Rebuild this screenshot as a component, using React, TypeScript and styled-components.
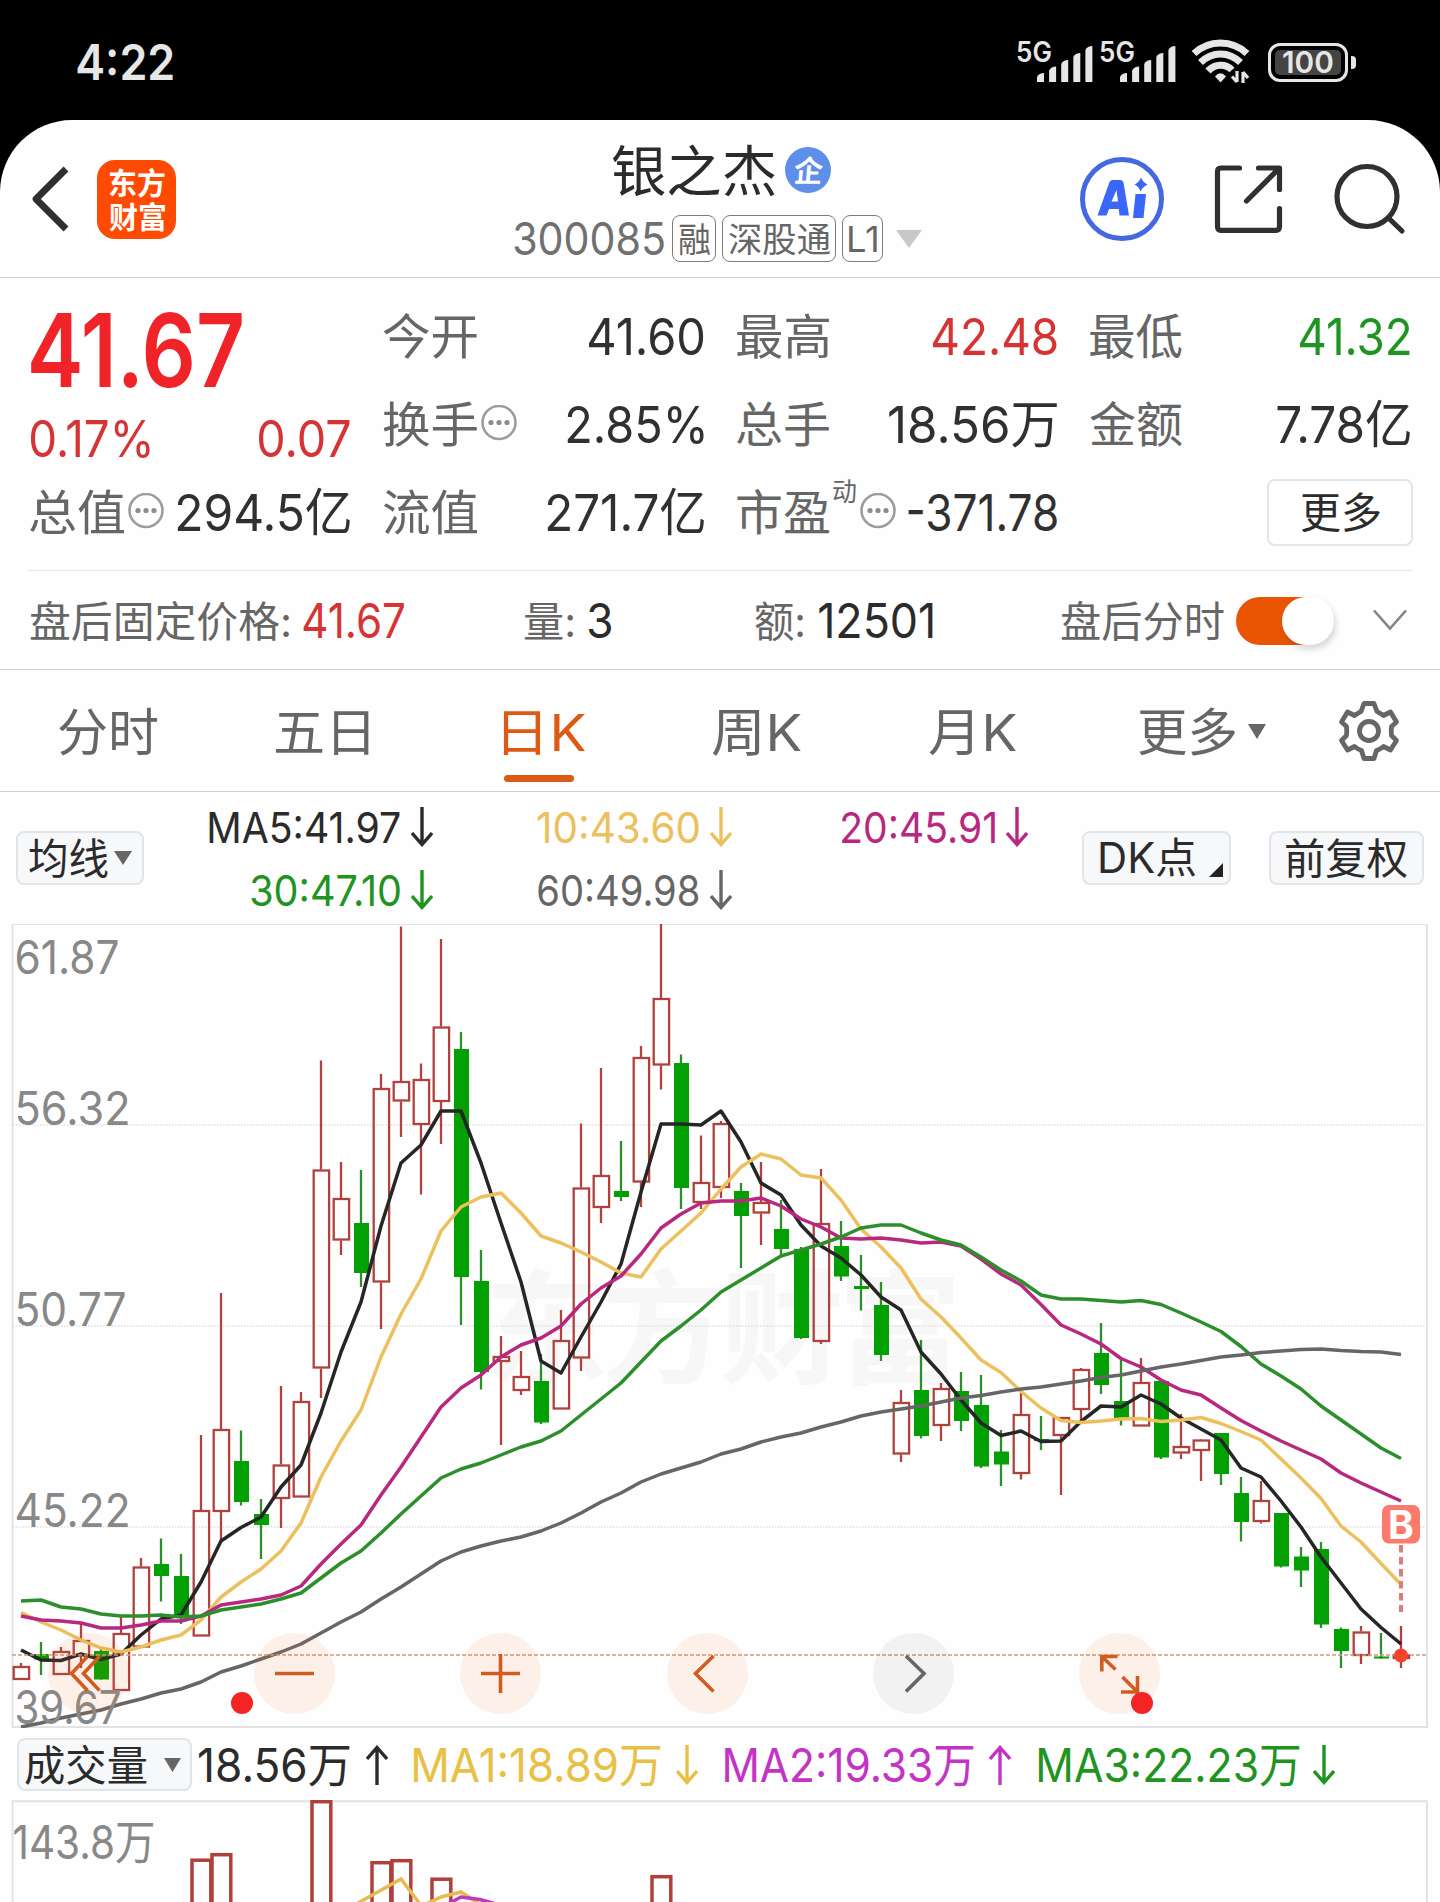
import React, { useLayoutEffect, useRef, useState } from 'react';
import styled, { createGlobalStyle } from 'styled-components';

const GlobalStyle = createGlobalStyle`
  html, body { margin: 0; padding: 0; background: #000; }
  body { font-family: Inter, "Noto Sans CJK SC", sans-serif; }
  * { box-sizing: border-box; }
  svg { display: block; flex: none; }
`;

const C = {
  text: '#2b2b2b',
  label: '#666666',
  axis: '#888888',
  line: '#cfcfcf',
  frame: '#e3e3e3',
  red: '#d63434',
  green: '#1f9420',
  orange: '#dd5a14',
  ma10: '#ecc05c',
  ma20: '#b8287e',
  candleRed: '#ae423e',
  candleGreen: '#02a002',
  candleWick: '#2c8f2c',
};

/* ---------- text fitted to a given ink width ---------- */

const InkBox = styled.span<{ $w: number; $size: number; $color: string; $weight: number }>`
  display: block;
  flex: none;
  width: ${(p) => p.$w}px;
  font-size: ${(p) => p.$size}px;
  line-height: ${(p) => p.$size}px;
  height: ${(p) => p.$size}px;
  color: ${(p) => p.$color};
  font-weight: ${(p) => p.$weight};
`;

const InkRun = styled.span`
  display: inline-block;
  white-space: nowrap;
  transform-origin: 0 50%;
`;

interface InkProps {
  w: number;
  size: number;
  color?: string;
  weight?: number;
  className?: string;
  children: string;
}

function Ink({ w, size, color = C.text, weight = 400, className, children }: InkProps) {
  const ref = useRef<HTMLSpanElement>(null);
  const [transform, setTransform] = useState('none');
  useLayoutEffect(() => {
    const ctx = document.createElement('canvas').getContext('2d');
    if (!ref.current || !ctx) return;
    const s = getComputedStyle(ref.current);
    ctx.font = `${s.fontWeight} ${s.fontSize} ${s.fontFamily}`;
    const m = ctx.measureText(children);
    const k = w / (m.actualBoundingBoxLeft + m.actualBoundingBoxRight);
    // Han glyphs sit slightly above the optical centre of the Latin line box
    const dy = /^[\u4e00-\u9fff]/.test(children) ? 1 : 0;
    setTransform(`translate(${m.actualBoundingBoxLeft * k}px, ${dy}px) scaleX(${k})`);
  }, [w, size, weight, children]);
  return (
    <InkBox $w={w} $size={size} $color={color} $weight={weight} className={className}>
      <InkRun ref={ref} style={{ transform }}>{children}</InkRun>
    </InkBox>
  );
}

/* ---------- status bar ---------- */

const Screen = styled.div`
  width: 1440px;
  height: 1902px;
  overflow: hidden;
  background: #000;
`;

const StatusBar = styled.header`
  height: 120px;
  padding: 4px 84px 0 77px;
  display: flex;
  align-items: center;
  justify-content: space-between;
`;

const StatusIcons = styled.div`
  display: flex;
  align-items: center;
`;

const Signal = styled.div`
  display: flex;
  align-items: flex-end;
  height: 42px;
  margin-right: 7px;
  & > svg { margin-left: -14px; }
`;

const NetLabel = styled(Ink)`
  align-self: flex-start;
  margin-top: -3px;
`;

const Battery = styled.div`
  width: 80px;
  height: 39px;
  margin-left: 17px;
  border: 3.5px solid #e6e6e6;
  border-radius: 12px;
  padding: 4px;
`;

const BatteryFill = styled.div`
  height: 100%;
  border-radius: 5px;
  background: #444;
  display: flex;
  align-items: center;
  justify-content: center;
`;

const BatteryTip = styled.div`
  width: 5px;
  height: 13px;
  margin-left: 3px;
  border-radius: 0 4px 4px 0;
  background: #e6e6e6;
`;

function SignalStrength() {
  const heights = [9, 15.5, 22, 29, 36];
  return (
    <Signal>
      <NetLabel w={34} size={28} color="#e6e6e6" weight={600}>5G</NetLabel>
      <svg width="56" height="42" viewBox="0 0 56 42">
        {heights.map((h, i) => {
          const x = i * 12.1;
          return <path key={h} d={`M${x} 41V${41 - h + 4}Q${x + 2} ${41 - h} ${x + 7} ${41 - h}V41Z`} fill="#e6e6e6" />;
        })}
      </svg>
    </Signal>
  );
}

const WifiSvg = styled.svg`
  margin-left: 8px;
`;

function WifiIcon() {
  return (
    <WifiSvg width="60" height="46" viewBox="0 0 60 46" fill="none" stroke="#e6e6e6" strokeWidth="7">
      <path d="M3 14.5C18 0.5 41 0.5 56 14.5" />
      <path d="M9.5 23.500C21 12 38 12 49.5 23.500" />
      <path d="M17 32C24 24.500 35 24.500 41 31" />
      <path d="M24 37.500Q29.500 31 35 37.500L29.500 43.500Z" fill="#e6e6e6" stroke="none" />
      <path d="M46 32V43M46 43L41 37.500M52 44V33M52 33L57 39" strokeWidth="3.200" />
    </WifiSvg>
  );
}

/* ---------- title bar ---------- */

const Panel = styled.main`
  height: 1782px;
  overflow: hidden;
  background: #fefefe;
  border-radius: 72px 72px 0 0;
`;

const TitleBar = styled.div`
  height: 158px;
  border-bottom: 1px solid ${C.line};
  display: grid;
  grid-template-columns: 480px 480px 480px;
`;

const BarLeft = styled.div`
  display: flex;
  align-items: center;
  padding: 1px 0 0 30px;
`;

const Logo = styled.div`
  width: 79px;
  height: 79px;
  margin-left: 26px;
  border-radius: 18px;
  background: #ff4a04;
  display: flex;
  flex-direction: column;
  align-items: center;
  justify-content: center;
  gap: 4px;
`;

const BarCenter = styled.div`
  padding-top: 20px;
`;

const TitleRow = styled.div`
  height: 60px;
  padding-left: 132px;
  display: flex;
  align-items: center;
  gap: 10px;
`;

const Badge = styled.div`
  width: 46px;
  height: 46px;
  border-radius: 50%;
  background: #5d8fe8;
  display: flex;
  align-items: center;
  justify-content: center;
`;

const Slanted = styled(Ink)`
  transform: skewX(-5deg);
`;

const CodeRow = styled.div`
  height: 47px;
  margin-top: 15px;
  padding-left: 34px;
  display: flex;
  align-items: center;
  gap: 6px;
`;

const Tag = styled.div<{ $w: number; $left?: number }>`
  width: ${(p) => p.$w}px;
  height: 47px;
  margin-left: ${(p) => p.$left ?? 0}px;
  border: 1.5px solid #7c7c7c;
  border-radius: 8px;
  display: flex;
  align-items: center;
  justify-content: center;
`;

const BarRight = styled.div`
  display: flex;
  align-items: center;
  padding: 1px 0 0 120px;
`;

const AiRing = styled.div`
  width: 84px;
  height: 84px;
  border: 5px solid #4468e0;
  border-radius: 50%;
  display: flex;
  align-items: center;
  justify-content: center;
`;

function Triangle({ w, h, color }: { w: number; h: number; color: string }) {
  return (
    <svg width={w} height={h} viewBox="0 0 10 10" preserveAspectRatio="none">
      <path d="M0 0H10L5 10Z" fill={color} />
    </svg>
  );
}

/* ---------- quote ---------- */

const Quote = styled.section`
  height: 293px;
  margin: 0 28px;
  padding: 14px 2px 0;
  border-bottom: 1px solid #e6e6e6;
  display: grid;
  grid-template-columns: 320px 321px 320px 320px;
  grid-template-rows: 88px 88px 88px;
  column-gap: 33px;
`;

const PriceCell = styled.div`
  grid-row: span 2;
  display: flex;
  flex-direction: column;
  padding-left: 1px;
`;

const PriceMain = styled.div`
  height: 116px;
  display: flex;
  align-items: center;
`;

const Cell = styled.div<{ $h?: number }>`
  height: ${(p) => p.$h ?? 88}px;
  display: flex;
  align-items: center;
  justify-content: space-between;
`;

const Label = styled.div`
  display: flex;
  align-items: center;
  gap: 4px;
`;

const Sup = styled(Ink)`
  margin-top: -42px;
`;

const Outlined = styled.button`
  width: 146px;
  height: 67px;
  margin-left: 177px;
  padding: 0;
  border: 2px solid #e3e6e8;
  border-radius: 8px;
  background: #fff;
  display: flex;
  flex: none;
  align-items: center;
  justify-content: center;
  font-family: inherit;
`;

function InfoDot() {
  return (
    <svg width="36" height="38" viewBox="0 0 36 38">
      <circle cx="18" cy="17.500" r="16.500" fill="none" stroke="#9c9c9c" strokeWidth="2.600" />
      {[10, 18, 26].map((x) => <circle key={x} cx={x} cy="17.500" r="2.600" fill="#8c8c8c" />)}
    </svg>
  );
}

interface CellSpec {
  label: string;
  lw: number;
  value: string;
  vw: number;
  color?: string;
  info?: boolean;
  sup?: string;
}

function QuoteCell({ label, lw, value, vw, color = '#303030', info, sup }: CellSpec) {
  return (
    <Cell>
      <Label>
        <Ink w={lw} size={48} color={C.label}>{label}</Ink>
        {sup && <Sup w={23} size={26} color={C.label}>{sup}</Sup>}
        {info && <InfoDot />}
      </Label>
      <Ink w={vw} size={51} color={color}>{value}</Ink>
    </Cell>
  );
}

/* ---------- after-hours row ---------- */

const AfterHours = styled.section`
  height: 99px;
  border-bottom: 1px solid ${C.line};
  padding: 2px 34px 0 30px;
  display: flex;
  align-items: center;
`;

const Pair = styled.div<{ $left?: number; $gap: number }>`
  display: flex;
  align-items: center;
  margin-left: ${(p) => p.$left ?? 0}px;
  gap: ${(p) => p.$gap}px;
`;

const Switch = styled.div`
  width: 98px;
  height: 48px;
  border-radius: 24px;
  background: linear-gradient(90deg, #ea5504 75px, transparent 75px);
  display: flex;
  justify-content: flex-end;
`;

const Knob = styled.div`
  width: 52px;
  height: 48px;
  border-radius: 25px;
  background: #fff;
  box-shadow: 2px 4px 6px rgba(0, 0, 0, 0.16);
`;

/* ---------- period tabs ---------- */

const Tabs = styled.nav`
  height: 122px;
  border-bottom: 1px solid ${C.line};
  display: flex;
  align-items: center;
  padding: 1px 0 0 59px;
`;

const Tab = styled.div<{ $left: number }>`
  position: relative;
  display: flex;
  align-items: center;
  gap: 12px;
  margin-left: ${(p) => p.$left}px;
`;

const Underline = styled.div`
  position: absolute;
  left: 1px;
  top: 69px;
  width: 70px;
  height: 7px;
  border-radius: 4px;
  background: ${C.orange};
`;

function GearIcon() {
  return (
    <svg width="66" height="66" viewBox="1335.5 697.5 66 66" fill="none" stroke="#666" strokeWidth="4.800" strokeLinejoin="round">
      <path d="M1363.500 703H1373.500L1376.500 711Q1380 713 1383 715L1390 711.500L1396 721.500L1391 726Q1390.500 730.500 1391 735L1396 740L1390 749.500L1383 746Q1380 748.500 1376 750L1373.500 758H1363.500L1361 750Q1357 748.500 1354 746L1347 749.500L1341 740L1346 735Q1346.500 730.500 1346 726L1341 721.500L1347 711.500L1354 715Q1357 713 1360.500 711Z" />
      <circle cx="1368.500" cy="730.500" r="9.500" />
    </svg>
  );
}

/* ---------- indicator rows ---------- */

const MaBar = styled.section`
  height: 132px;
  padding-left: 16px;
  display: flex;
  align-items: center;
`;

const Chip = styled.button<{ $w: number; $h: number; $left?: number; $gap?: number; $pad?: string }>`
  width: ${(p) => p.$w}px;
  height: ${(p) => p.$h}px;
  margin: 0 0 0 ${(p) => p.$left ?? 0}px;
  padding: ${(p) => p.$pad ?? '0'};
  border: 2px solid #e2e5e8;
  border-radius: 8px;
  background: #f6f8fa;
  display: flex;
  flex: none;
  align-items: center;
  justify-content: center;
  gap: ${(p) => p.$gap ?? 6}px;
  font-family: inherit;
`;

const Corner = styled.span`
  align-self: flex-end;
  margin-bottom: 6px;
  border-left: 14px solid transparent;
  border-bottom: 14px solid #222;
`;

const MaGrid = styled.div`
  width: 819px;
  margin-left: 65px;
  padding-top: 1px;
  display: grid;
  grid-template-columns: 224px 194px 191px;
  grid-template-rows: 63px 63px;
  column-gap: 105px;
`;

const MaCell = styled.div`
  display: flex;
  align-items: center;
  justify-content: flex-end;
  gap: 11px;
`;

function Arrow({ up, color }: { up?: boolean; color: string }) {
  return (
    <svg width="22" height="40" viewBox="0 0 22 40" fill="none" stroke={color} strokeWidth="3.400">
      {up ? <path d="M11 40V2M1 14L11 2.500L21 14" /> : <path d="M11 0V38M1 26L11 37.500L21 26" />}
    </svg>
  );
}

const VolumeBar = styled.section`
  height: 72px;
  padding: 1px 0 0 17px;
  display: flex;
  align-items: center;
`;

const VolItem = styled.div<{ $left: number; $gap: number }>`
  display: flex;
  align-items: center;
  margin-left: ${(p) => p.$left}px;
  gap: ${(p) => p.$gap}px;
`;

/* ---------- charts ---------- */

// direction, high, body top, body bottom, low (one entry per day, 20px apart)
type Candle = [0 | 1, number, number, number, number];
const R = 1;
const G = 0;
const candles: Candle[] = [
  [R, 1663, 1666, 1680, 1680], [G, 1642, 1654, 1659.5, 1675], [R, 1647, 1651, 1675, 1675], [R, 1623, 1640, 1656, 1668],
  [G, 1649, 1651, 1679.5, 1679.5], [R, 1617, 1633, 1691, 1691], [R, 1558, 1566.5, 1647.5, 1647.5], [G, 1538.5, 1564, 1576, 1601.5],
  [G, 1554, 1576, 1617, 1624], [R, 1435, 1510, 1636.5, 1636.5], [R, 1293, 1429, 1512, 1540], [G, 1430.5, 1461, 1502, 1505.5],
  [G, 1499, 1514, 1525, 1559], [R, 1386, 1464.5, 1499, 1528], [R, 1392, 1401, 1497.5, 1497.5], [R, 1060.5, 1169.5, 1368.5, 1398],
  [R, 1162, 1198, 1240.5, 1255], [G, 1170, 1223, 1273, 1287], [R, 1074, 1088, 1282.5, 1329], [R, 926.5, 1081, 1101.5, 1137],
  [R, 1063.5, 1079, 1125, 1194.5], [R, 939, 1026.5, 1102, 1144], [G, 1032, 1049, 1277, 1325], [G, 1250, 1281, 1372, 1389.5],
  [R, 1336, 1356, 1362, 1445], [R, 1351, 1376, 1391, 1395], [G, 1354, 1381, 1422.5, 1424], [R, 1310, 1340, 1409.5, 1409.5],
  [R, 1123.5, 1187.5, 1358.5, 1371], [R, 1068, 1175, 1208, 1223], [G, 1141, 1191, 1197, 1201], [R, 1046, 1057, 1182.5, 1207],
  [R, 924, 998, 1065.5, 1089.5], [G, 1054.5, 1063, 1188, 1209], [R, 1135.5, 1182, 1203, 1209], [R, 1121, 1123, 1188, 1198],
  [G, 1183, 1191, 1216, 1268], [R, 1162, 1202, 1213.5, 1245], [G, 1200, 1229, 1249, 1255], [G, 1247, 1249, 1338, 1339],
  [R, 1169, 1223, 1342, 1344], [G, 1221, 1246, 1276.5, 1281], [G, 1255, 1286, 1289, 1310.5], [G, 1282, 1305, 1355, 1361],
  [R, 1390, 1402, 1454.5, 1462], [G, 1340, 1390, 1436, 1438.5], [R, 1383, 1388, 1426, 1441], [G, 1372, 1391, 1421, 1431],
  [G, 1375, 1405, 1466.5, 1468], [G, 1430, 1451.5, 1464.5, 1486], [R, 1393, 1414, 1474, 1479.5], [G, 1416, 1439, 1441, 1450],
  [R, 1417, 1417, 1436, 1495], [R, 1368, 1369, 1410, 1421], [G, 1323, 1353, 1385, 1394], [G, 1360, 1401, 1420, 1425.5],
  [R, 1358, 1382, 1426.5, 1426.5], [G, 1381, 1381, 1457.5, 1459], [R, 1414, 1446, 1453.5, 1459], [R, 1440, 1439.5, 1451, 1481],
  [G, 1433, 1433, 1474, 1485], [G, 1477, 1493, 1522, 1541.5], [R, 1481, 1500, 1522, 1523.5], [G, 1513, 1513, 1566.5, 1567.5],
  [G, 1547, 1556.5, 1570.5, 1587], [G, 1542, 1549, 1624.5, 1628], [G, 1627.5, 1629, 1651, 1668], [R, 1626, 1631.5, 1656, 1664],
  [G, 1633, 1656.5, 1658.5, 1658.5], [R, 1626, 1654.5, 1659, 1668],
];

const ma5 = [1650, 1660, 1660.5, 1654, 1659.5, 1654, 1635, 1619, 1615, 1582, 1541, 1527.5, 1517, 1487, 1465, 1413, 1352, 1302, 1226, 1163, 1145, 1111, 1111, 1163, 1223, 1282, 1361, 1373, 1337, 1302, 1264, 1192, 1124, 1124, 1125, 1111, 1142, 1183, 1195, 1225, 1246, 1258, 1275, 1297, 1310, 1352, 1374, 1400, 1423, 1435.5, 1431, 1441.5, 1441, 1421.5, 1406, 1407, 1395, 1404, 1418, 1429, 1440, 1468, 1477, 1501, 1527, 1557, 1583, 1609, 1627.5, 1644];
const ma10 = [1612.5, 1622, 1630, 1640, 1648, 1652, 1647, 1640, 1635, 1620, 1597, 1582, 1569, 1551, 1523, 1477, 1441, 1410, 1357, 1314, 1279, 1231, 1207, 1197, 1193, 1213, 1236, 1243, 1252, 1262, 1273, 1277, 1249, 1231, 1213, 1189, 1167, 1154, 1159, 1175, 1178, 1200, 1229, 1247, 1268, 1299, 1317, 1338, 1360, 1372.5, 1391.5, 1408, 1420.5, 1422.5, 1421, 1419, 1418.5, 1421.5, 1420, 1417.5, 1423.5, 1431.5, 1440, 1459, 1478, 1498.5, 1526, 1542, 1563.5, 1584.5];
const ma20 = [1616, 1620, 1621, 1623, 1628, 1628, 1625, 1621, 1621, 1616, 1605, 1602, 1599, 1595, 1586, 1564, 1544, 1525, 1495, 1467, 1437, 1407, 1388, 1375, 1357, 1345, 1338, 1326, 1304, 1288, 1276, 1254, 1228, 1214, 1203, 1201, 1201, 1198, 1206, 1219, 1227, 1238, 1239, 1238, 1240, 1243, 1242, 1246, 1259, 1274, 1285, 1304.5, 1325, 1334, 1344, 1358.5, 1367, 1380, 1390, 1395, 1408, 1420.5, 1431, 1441, 1450, 1459, 1473, 1483, 1492, 1501];
const ma30 = [1601, 1600, 1607, 1609, 1614, 1616, 1616, 1615, 1617, 1616, 1610, 1607, 1604, 1599, 1593, 1578, 1563, 1551, 1533, 1514, 1496, 1478, 1469, 1463, 1455, 1447, 1441, 1431, 1415, 1399, 1383, 1362, 1341, 1326, 1310, 1292, 1280, 1268, 1256, 1250, 1244, 1237, 1228, 1225, 1225, 1233, 1240, 1245, 1257, 1270, 1281, 1295, 1299, 1299, 1300.5, 1302, 1300.5, 1304.5, 1313, 1322, 1331.5, 1346.5, 1364, 1376, 1389, 1406, 1420, 1434, 1448, 1458.5];
const ma60 = [1727, 1723, 1718, 1714, 1710, 1704, 1699, 1693, 1689, 1682, 1672, 1666, 1659, 1652, 1644, 1633, 1622, 1612, 1599, 1587, 1574, 1561, 1552, 1546, 1541, 1537, 1531, 1523, 1513, 1502, 1493, 1482, 1474, 1468, 1462, 1454, 1449, 1442, 1437, 1433, 1427, 1422, 1416, 1412, 1409, 1406, 1402, 1398, 1395.5, 1392, 1389, 1387, 1384, 1381, 1377.5, 1375, 1371, 1367, 1364, 1360.5, 1357, 1355, 1352.5, 1351, 1349.5, 1349, 1350.5, 1351.5, 1352, 1354.5];

const toPoints = (values: number[]) => values.map((y, i) => `${21 + i * 20},${y}`).join(' ');

const ChartArea = styled.section`
  position: relative;
  height: 804px;
`;

const AxisText = styled.text`
  font-family: Inter, "Noto Sans CJK SC", sans-serif;
  font-size: 46.5px;
  fill: ${C.axis};
`;

const Watermark = styled.text`
  font-family: "Noto Sans CJK SC", sans-serif;
  font-size: 124px;
  font-weight: 700;
  fill: #f7f7f7;
`;

const SignalLetter = styled.text`
  font-family: Inter, sans-serif;
  font-size: 39px;
  font-weight: 700;
  fill: #fff;
  text-anchor: middle;
`;

const axis: [string, number, number][] = [
  ['61.87', 974, 103], ['56.32', 1125, 114], ['50.77', 1326, 110], ['45.22', 1527, 114], ['39.67', 1724, 105],
];

function CandleShape({ i, c }: { i: number; c: Candle }) {
  const x = 21 + i * 20;
  const [up, hi, top, bot, lo] = c;
  if (up) {
    return (
      <g stroke={C.candleRed} strokeWidth="2.300" fill="none">
        <path d={`M${x} ${hi}V${top}M${x} ${bot}V${lo}`} />
        <rect x={x - 7.3} y={top + 1} width="15.400" height={bot - top - 2} />
      </g>
    );
  }
  return (
    <g>
      <path d={`M${x} ${hi}V${lo}`} stroke={C.candleWick} strokeWidth="2.300" />
      <rect x={x - 7} y={top} width="15" height={bot - top} fill={C.candleGreen} />
    </g>
  );
}

function CandleChart() {
  return (
    <svg width="1440" height="804" viewBox="0 924 1440 804">
      <Watermark x="484" y="1374" textLength="478">东方财富</Watermark>
      <rect x="12.500" y="924" width="1414.500" height="803" fill="none" stroke={C.frame} strokeWidth="2" />
      {[1125, 1326, 1527].map((y) => (
        <path key={y} d={`M13 ${y}H1427`} stroke="#e0e0e0" strokeWidth="1.600" strokeDasharray="1.500 1.500" />
      ))}
      {candles.map((c, i) => <CandleShape key={i} i={i} c={c} />)}
      <g fill="none" strokeWidth="3.500" strokeLinejoin="round">
        <polyline points={toPoints(ma5)} stroke="#262626" />
        <polyline points={toPoints(ma10)} stroke={C.ma10} />
        <polyline points={toPoints(ma20)} stroke={C.ma20} />
        <polyline points={toPoints(ma30)} stroke="#2c8f2c" />
        <polyline points={toPoints(ma60)} stroke="#666" />
      </g>
      {axis.map(([t, y, w]) => (
        <AxisText key={t} x="14.500" y={y} textLength={w + 2} lengthAdjust="spacingAndGlyphs">{t}</AxisText>
      ))}
      <path d="M12 1655H1427" stroke="#cf9a78" strokeWidth="1.700" strokeDasharray="4 2" />
      <path d="M1401 1545V1612" stroke="#d88078" strokeWidth="4" strokeDasharray="7.500 4.500" />
      <rect x="1382" y="1505" width="38" height="38.500" rx="7" fill="#fa7a6c" />
      <SignalLetter x="1401" y="1538.500">B</SignalLetter>
      <circle cx="1401" cy="1655.500" r="7" fill="#f4442c" />
    </svg>
  );
}

const Controls = styled.div`
  position: absolute;
  left: 47.5px;
  top: 708.5px;
  width: 1112.8px;
  display: flex;
  justify-content: space-between;
`;

const RoundButton = styled.div<{ $muted?: boolean }>`
  position: relative;
  width: 81px;
  height: 81px;
  border-radius: 50%;
  background: ${(p) => (p.$muted ? 'rgba(90, 90, 90, 0.07)' : 'rgba(236, 116, 40, 0.1)')};
`;

const Dot = styled.i<{ $x: number }>`
  position: absolute;
  left: ${(p) => p.$x}px;
  top: 59px;
  width: 22px;
  height: 22px;
  border-radius: 50%;
  background: #f22424;
`;

const controls: { d: string; muted?: boolean; dot?: number }[] = [
  { d: 'M39.500 23.500L23.500 40.500L39.500 57.500M51.500 23.500L35.500 40.500L51.500 57.500' },
  { d: 'M21 40.500H60', dot: -22.7 },
  { d: 'M21 40.500H60M40.500 21V60' },
  { d: 'M46.500 23L28.500 40.500L46.500 58.500' },
  { d: 'M33 23L51 40.500L33 58.500', muted: true },
  { d: 'M38.500 23.500H22.800V38.500M22.800 23.500L36.500 36.500M43.500 44L58 58.500M58.500 43V59H42', dot: 51.5 },
];

const VolumeChartArea = styled.section`
  height: 102px;
`;

function VolumeChart() {
  const bars: [number, number][] = [[201, 1858.5], [221, 1853], [321, 1800], [381, 1861], [401, 1859], [441, 1877.5], [661, 1875]];
  return (
    <svg width="1440" height="102" viewBox="0 1800 1440 102">
      <path d="M12.500 1902V1801.200H1427V1902" fill="none" stroke={C.frame} strokeWidth="2" />
      {bars.map(([x, y]) => (
        <rect key={x} x={x - 9} y={y + 1.7} width="18.800" height="120" fill="none" stroke="#b0403c" strokeWidth="3.500" />
      ))}
      <polyline points="358,1903 401,1879 420,1904" fill="none" stroke="#e6bc50" strokeWidth="3.500" />
      <polyline points="426,1904 441,1897 461,1892 478,1903" fill="none" stroke="#e6bc50" strokeWidth="3.500" />
      <polyline points="446,1905 461,1897 480,1899.500 500,1905" fill="none" stroke="#c038c0" strokeWidth="3.500" />
      <AxisText x="12.500" y="1859" textLength="143" lengthAdjust="spacingAndGlyphs">143.8万</AxisText>
    </svg>
  );
}

export default function App() {
  const tab = 51;
  return (
    <Screen>
      <GlobalStyle />
      <StatusBar>
        <Ink w={96} size={49} color="#e6e6e6" weight={600}>4:22</Ink>
        <StatusIcons>
          <SignalStrength />
          <SignalStrength />
          <WifiIcon />
          <Battery>
            <BatteryFill><Ink w={50} size={30} color="#e6e6e6" weight={600}>100</Ink></BatteryFill>
          </Battery>
          <BatteryTip />
        </StatusIcons>
      </StatusBar>

      <Panel>
        <TitleBar>
          <BarLeft>
            <svg width="41" height="68" viewBox="0 0 41 68" fill="none" stroke="#303030" strokeWidth="6.800" strokeLinejoin="round">
              <path d="M36 4L6 34L36 64" />
            </svg>
            <Logo>
              <Ink w={56} size={30} color="#fff" weight={700}>东方</Ink>
              <Ink w={56} size={30} color="#fff" weight={700}>财富</Ink>
            </Logo>
          </BarLeft>
          <BarCenter>
            <TitleRow>
              <Ink w={163} size={55}>银之杰</Ink>
              <Badge><Slanted w={29} size={30} color="#fff" weight={700}>企</Slanted></Badge>
            </TitleRow>
            <CodeRow>
              <Ink w={150} size={45} color="#707070">300085</Ink>
              <Tag $w={44} $left={2}><Ink w={31} size={34} color={C.label}>融</Ink></Tag>
              <Tag $w={114}><Ink w={101} size={34} color={C.label}>深股通</Ink></Tag>
              <Tag $w={41}><Ink w={28} size={36} color={C.label}>L1</Ink></Tag>
              <Pair $gap={0} $left={7}><Triangle w={26} h={18} color="#c8c8c8" /></Pair>
            </CodeRow>
          </BarCenter>
          <BarRight>
            <AiRing>
              <svg width="52" height="46" viewBox="1094 174 52 46" fill="#3a66fa">
                <path fillRule="evenodd" d="M1095.500 213.500L1107.500 180Q1108.500 178 1111 178H1118.500Q1121 178 1121.500 180.500L1127 213.500H1117.500L1116.800 207H1107L1104.500 213.500ZM1109.500 199.500H1116L1114.500 188Z" />
                <path d="M1133.500 192H1144L1141.500 216H1131Z" />
                <path d="M1139 175.500Q1141 180.500 1145.500 182.500Q1141 184.500 1138.500 189.500Q1137 184.500 1132.500 182.500Q1137 180.500 1139 175.500Z" />
              </svg>
            </AiRing>
            <Pair $gap={0} $left={50}>
              <svg width="70" height="70" viewBox="1214 163.500 70 70" fill="none" stroke="#303030" strokeWidth="5.200" strokeLinecap="round" strokeLinejoin="round">
                <path d="M1239.500 167.500H1221Q1217.500 167.500 1217.500 171V226Q1217.500 229.800 1221 229.800H1276Q1279.500 229.800 1279.500 226V208M1258.500 167.500H1279.500V189M1278.500 168.500L1246.500 200.500" />
              </svg>
            </Pair>
            <Pair $gap={0} $left={49}>
              <svg width="74" height="72" viewBox="1334 162 74 72" fill="none" stroke="#303030" strokeWidth="5.200" strokeLinecap="round">
                <circle cx="1368" cy="195.500" r="30" />
                <path d="M1390 217.500L1403 230" />
              </svg>
            </Pair>
          </BarRight>
        </TitleBar>

        <Quote>
          <PriceCell>
            <PriceMain><Ink w={211} size={102} color="#f02428" weight={600}>41.67</Ink></PriceMain>
            <Cell $h={60}>
              <Ink w={119} size={51} color={C.red}>0.17%</Ink>
              <Ink w={91} size={51} color={C.red}>0.07</Ink>
            </Cell>
          </PriceCell>
          <QuoteCell label="今开" lw={94} value="41.60" vw={116} />
          <QuoteCell label="最高" lw={92} value="42.48" vw={125} color={C.red} />
          <QuoteCell label="最低" lw={92} value="41.32" vw={111} color={C.green} />
          <QuoteCell label="换手" lw={94} value="2.85%" vw={137} info />
          <QuoteCell label="总手" lw={92} value="18.56万" vw={168} />
          <QuoteCell label="金额" lw={92} value="7.78亿" vw={133} />
          <QuoteCell label="总值" lw={94} value="294.5亿" vw={173} info />
          <QuoteCell label="流值" lw={94} value="271.7亿" vw={157} />
          <QuoteCell label="市盈" lw={92} value="-371.78" vw={149} info sup="动" />
          <Cell><Outlined><Ink w={79} size={42}>更多</Ink></Outlined></Cell>
        </Quote>

        <AfterHours>
          <Pair $gap={14}>
            <Ink w={259} size={42} color={C.label}>盘后固定价格:</Ink>
            <Ink w={101} size={48} color={C.red}>41.67</Ink>
          </Pair>
          <Pair $gap={15} $left={120}>
            <Ink w={49} size={42} color={C.label}>量:</Ink>
            <Ink w={23} size={48}>3</Ink>
          </Pair>
          <Pair $gap={16} $left={144}>
            <Ink w={48} size={42} color={C.label}>额:</Ink>
            <Ink w={114} size={48}>12501</Ink>
          </Pair>
          <Pair $gap={12} $left={128}>
            <Ink w={163} size={42} color={C.label}>盘后分时</Ink>
            <Switch><Knob /></Switch>
          </Pair>
          <Pair $gap={0} $left={39}>
            <svg width="34" height="22" viewBox="0 0 34 22" fill="none" stroke="#858585" strokeWidth="2.600">
              <path d="M1 0.500L17 18.500L33 0.500" />
            </svg>
          </Pair>
        </AfterHours>

        <Tabs>
          <Tab $left={0}><Ink w={99} size={tab} color={C.label}>分时</Ink></Tab>
          <Tab $left={117}><Ink w={94} size={tab} color={C.label}>五日</Ink></Tab>
          <Tab $left={134}>
            <Ink w={82} size={tab} color={C.orange}>日K</Ink>
            <Underline />
          </Tab>
          <Tab $left={127}><Ink w={89} size={tab} color={C.label}>周K</Ink></Tab>
          <Tab $left={128}><Ink w={87} size={tab} color={C.label}>月K</Ink></Tab>
          <Tab $left={123}>
            <Ink w={97} size={tab} color={C.label}>更多</Ink>
            <Triangle w={18} h={15} color="#666" />
          </Tab>
          <Tab $left={70}><GearIcon /></Tab>
        </Tabs>

        <MaBar>
          <Chip $w={128} $h={54}>
            <Ink w={79} size={42}>均线</Ink>
            <Triangle w={18} h={14} color="#666" />
          </Chip>
          <MaGrid>
            <MaCell><Ink w={191} size={43}>MA5:41.97</Ink><Arrow color={C.text} /></MaCell>
            <MaCell><Ink w={161} size={43} color={C.ma10}>10:43.60</Ink><Arrow color={C.ma10} /></MaCell>
            <MaCell><Ink w={153} size={43} color={C.ma20}>20:45.91</Ink><Arrow color={C.ma20} /></MaCell>
            <MaCell><Ink w={149} size={43} color={C.green}>30:47.10</Ink><Arrow color={C.green} /></MaCell>
            <MaCell><Ink w={161} size={43} color={C.label}>60:49.98</Ink><Arrow color={C.label} /></MaCell>
          </MaGrid>
          <Chip $w={149} $h={54} $left={54} $gap={14} $pad="0 0 0 9px">
            <Ink w={95} size={42}>DK点</Ink>
            <Corner />
          </Chip>
          <Chip $w={155} $h={54} $left={38}><Ink w={121} size={42}>前复权</Ink></Chip>
        </MaBar>

        <ChartArea>
          <CandleChart />
          <Controls>
            {controls.map((c) => (
              <RoundButton key={c.d} $muted={c.muted}>
                <svg width="81" height="81" viewBox="0 0 81 81" fill="none" stroke={c.muted ? '#666' : '#d25c20'} strokeWidth="3.600">
                  <path d={c.d} />
                </svg>
                {c.dot !== undefined && <Dot $x={c.dot} />}
              </RoundButton>
            ))}
          </Controls>
        </ChartArea>

        <VolumeBar>
          <Chip $w={175} $h={53} $gap={17} $pad="0 3px 0 0">
            <Ink w={122} size={42}>成交量</Ink>
            <Triangle w={17} h={14} color="#666" />
          </Chip>
          <VolItem $left={7} $gap={16}><Ink w={151} size={47}>18.56万</Ink><Arrow up color={C.text} /></VolItem>
          <VolItem $left={26} $gap={15}><Ink w={247} size={47} color="#e8c044">MA1:18.89万</Ink><Arrow color="#e8c044" /></VolItem>
          <VolItem $left={27} $gap={15}><Ink w={249} size={47} color="#c434c4">MA2:19.33万</Ink><Arrow up color="#c434c4" /></VolItem>
          <VolItem $left={28} $gap={13}><Ink w={261} size={47} color={C.green}>MA3:22.23万</Ink><Arrow color={C.green} /></VolItem>
        </VolumeBar>

        <VolumeChartArea><VolumeChart /></VolumeChartArea>
      </Panel>
    </Screen>
  );
}
